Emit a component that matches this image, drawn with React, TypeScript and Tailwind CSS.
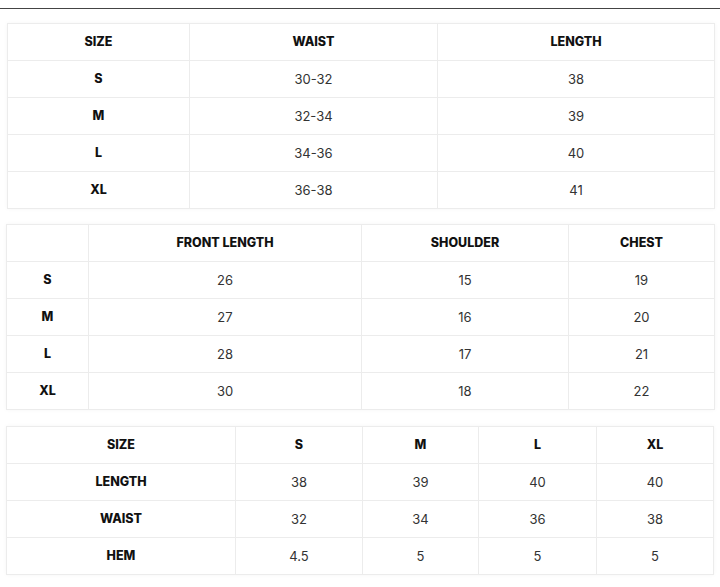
import React from "react"

type Table = {
  cols: number[]
  header: string[]
  rows: string[][]
}

const tables: Table[] = [
  {
    cols: [182, 248, 277],
    header: ["SIZE", "WAIST", "LENGTH"],
    rows: [
      ["S", "30-32", "38"],
      ["M", "32-34", "39"],
      ["L", "34-36", "40"],
      ["XL", "36-38", "41"],
    ],
  },
  {
    cols: [82, 273, 207, 146],
    header: ["", "FRONT LENGTH", "SHOULDER", "CHEST"],
    rows: [
      ["S", "26", "15", "19"],
      ["M", "27", "16", "20"],
      ["L", "28", "17", "21"],
      ["XL", "30", "18", "22"],
    ],
  },
  {
    cols: [229, 127, 116, 118, 117],
    header: ["SIZE", "S", "M", "L", "XL"],
    rows: [
      ["LENGTH", "38", "39", "40", "40"],
      ["WAIST", "32", "34", "36", "38"],
      ["HEM", "4.5", "5", "5", "5"],
    ],
  },
]

function SizeTable({ t, className }: { t: Table; className: string }) {
  return (
    <table className={`border-collapse table-fixed shadow-[0_0_4px_rgba(0,0,0,0.04)] ${className}`}>
      <colgroup>
        {t.cols.map((w, i) => (
          <col key={i} style={{ width: w }} />
        ))}
      </colgroup>
      <thead>
        <tr className="h-[37px]">
          {t.header.map((h, i) => (
            <th key={i} className="border border-[#ececec] text-[12.5px] font-extrabold text-[#111] text-center p-0 pt-px">
              {h}
            </th>
          ))}
        </tr>
      </thead>
      <tbody>
        {t.rows.map((r, i) => (
          <tr key={i} className="h-[37px]">
            {r.map((c, j) => (
              <td
                key={j}
                className={`border border-[#ececec] text-center p-0 pt-px ${
                  j === 0 ? "text-[12.5px] font-extrabold text-[#111]" : "text-[13px] text-[#333]"
                }`}
              >
                {c}
              </td>
            ))}
          </tr>
        ))}
      </tbody>
    </table>
  )
}

export default function App() {
  return (
    <div className="w-[720px] h-[587px] bg-white overflow-hidden" style={{ fontFamily: "Inter, 'Noto Sans', sans-serif" }}>
      <div className="h-[8px]" />
      <div className="h-px bg-[#444]" />
      <div className="pt-[14px] flex flex-col">
        <SizeTable t={tables[0]} className="ml-[7px] w-[707px]" />
        <SizeTable t={tables[1]} className="mt-[15px] ml-[6px] w-[708px]" />
        <SizeTable t={tables[2]} className="mt-[16px] ml-[6px] w-[707px]" />
      </div>
    </div>
  )
}
